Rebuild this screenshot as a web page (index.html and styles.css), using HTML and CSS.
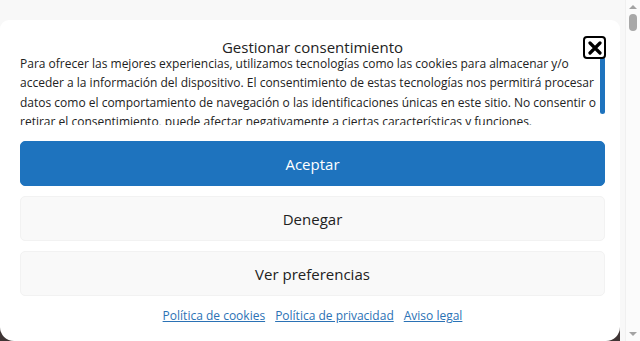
FILE: index.html
```html
<!DOCTYPE html>
<html lang="es">
<head>
<meta charset="utf-8">
<link rel="stylesheet" href="styles.css">
</head>
<body>
<div class="frame">
  <div class="main">
    <div class="cardwrap">
      <div class="card">
        <div class="header">
          <div class="title">Gestionar consentimiento</div>
          <button class="close" aria-label="Cerrar">
            <svg width="14" height="14" viewBox="0 0 14 14"><path d="M2 2 L12 12 M12 2 L2 12" stroke="#000" stroke-width="3.2" stroke-linecap="round"/></svg>
          </button>
        </div>
        <div class="msgbox">
          <div class="message">Para ofrecer las mejores experiencias, utilizamos tecnologías como las cookies para almacenar y/o acceder a la información del dispositivo. El consentimiento de estas tecnologías nos permitirá procesar datos como el comportamiento de navegación o las identificaciones únicas en este sitio. No consentir o retirar el consentimiento, puede afectar negativamente a ciertas características y funciones.</div>
          <div class="vbar"><div class="vthumb"></div></div>
        </div>
        <div class="buttons">
          <button class="btn accept">Aceptar</button>
          <button class="btn">Denegar</button>
          <button class="btn">Ver preferencias</button>
        </div>
        <div class="links">
          <a href="#">Política de cookies</a>
          <a href="#">Política de privacidad</a>
          <a href="#">Aviso legal</a>
        </div>
      </div>
    </div>
  </div>
  <div class="scrollbar">
    <div class="arrow up"></div>
    <div class="thumb"></div>
    <div class="track"></div>
    <div class="arrow down"></div>
  </div>
</div>
</body>
</html>
```
FILE: styles.css
```css
html, body {
  margin: 0;
  padding: 0;
  height: 100%;
  overflow: hidden;
}
body {
  font-family: "Open Sans", "DejaVu Sans", sans-serif;
  color: #222;
  background: #f8f8f8;
}
.frame {
  display: flex;
  height: 341px;
  width: 640px;
}
.main {
  flex: 1;
  padding: 20px 5px 0 0;
  background: #f8f8f8;
  display: flex;
  flex-direction: column;
}
.cardwrap {
  flex: 1;
  display: flex;
  flex-direction: column;
  background: linear-gradient(to bottom, #f8f8f8 60%, #3f3535 60%);
}
.card {
  flex: 1;
  background: #fff;
  border-radius: 9px 9px 14px 14px;
  padding: 16px 15px 0 20px;
  display: flex;
  flex-direction: column;
}
.header {
  position: relative;
  height: 18px;
}
.title {
  text-align: center;
  font-size: 15px;
  line-height: 22px;
  color: #222;
}
.close {
  position: absolute;
  right: -1px;
  top: 0;
  width: 23px;
  height: 23px;
  border: 2px solid #000;
  border-radius: 4px;
  background: #fff;
  padding: 0;
  display: flex;
  align-items: center;
  justify-content: center;
  z-index: 2;
}
.msgbox {
  display: flex;
  height: 71px;
}
.message {
  flex: 1;
  font-size: 12px;
  line-height: 19.3px;
  overflow: hidden;
  color: #222;
}
.vbar {
  width: 5px;
  padding-top: 3px;
}
.vthumb {
  height: 57px;
  background: #1e73be;
  border-radius: 3px;
}
.buttons {
  display: flex;
  flex-direction: column;
  gap: 10px;
  margin-top: 16px;
}
.btn {
  height: 45px;
  border-radius: 5px;
  border: 1px solid #f2f2f2;
  background: #f9f9f9;
  font-family: "Open Sans", "DejaVu Sans", sans-serif;
  font-size: 15px;
  color: #222;
  padding: 0;
}
.btn.accept {
  background: #1e73be;
  border-color: #1e73be;
  color: #fff;
}
.links {
  display: flex;
  justify-content: center;
  gap: 10px;
  margin-top: 11px;
  font-size: 12px;
  line-height: 17px;
}
.links a {
  color: #2b72b5;
  text-decoration: underline;
}
.scrollbar {
  width: 15px;
  background: #fbfbfb;
  border-left: 1px solid #f0f0f0;
  box-sizing: border-box;
  display: flex;
  flex-direction: column;
  align-items: center;
}
.arrow {
  width: 0;
  height: 0;
  border-left: 4px solid transparent;
  border-right: 4px solid transparent;
}
.arrow.up {
  margin-top: 5px;
  border-bottom: 4px solid #a3a3a3;
}
.arrow.down {
  margin-bottom: 5px;
  border-top: 4px solid #a3a3a3;
}
.thumb {
  width: 8px;
  height: 17px;
  margin-top: 5px;
  background: #a8a8a8;
  border-radius: 4px;
}
.track {
  flex: 1;
}
```
